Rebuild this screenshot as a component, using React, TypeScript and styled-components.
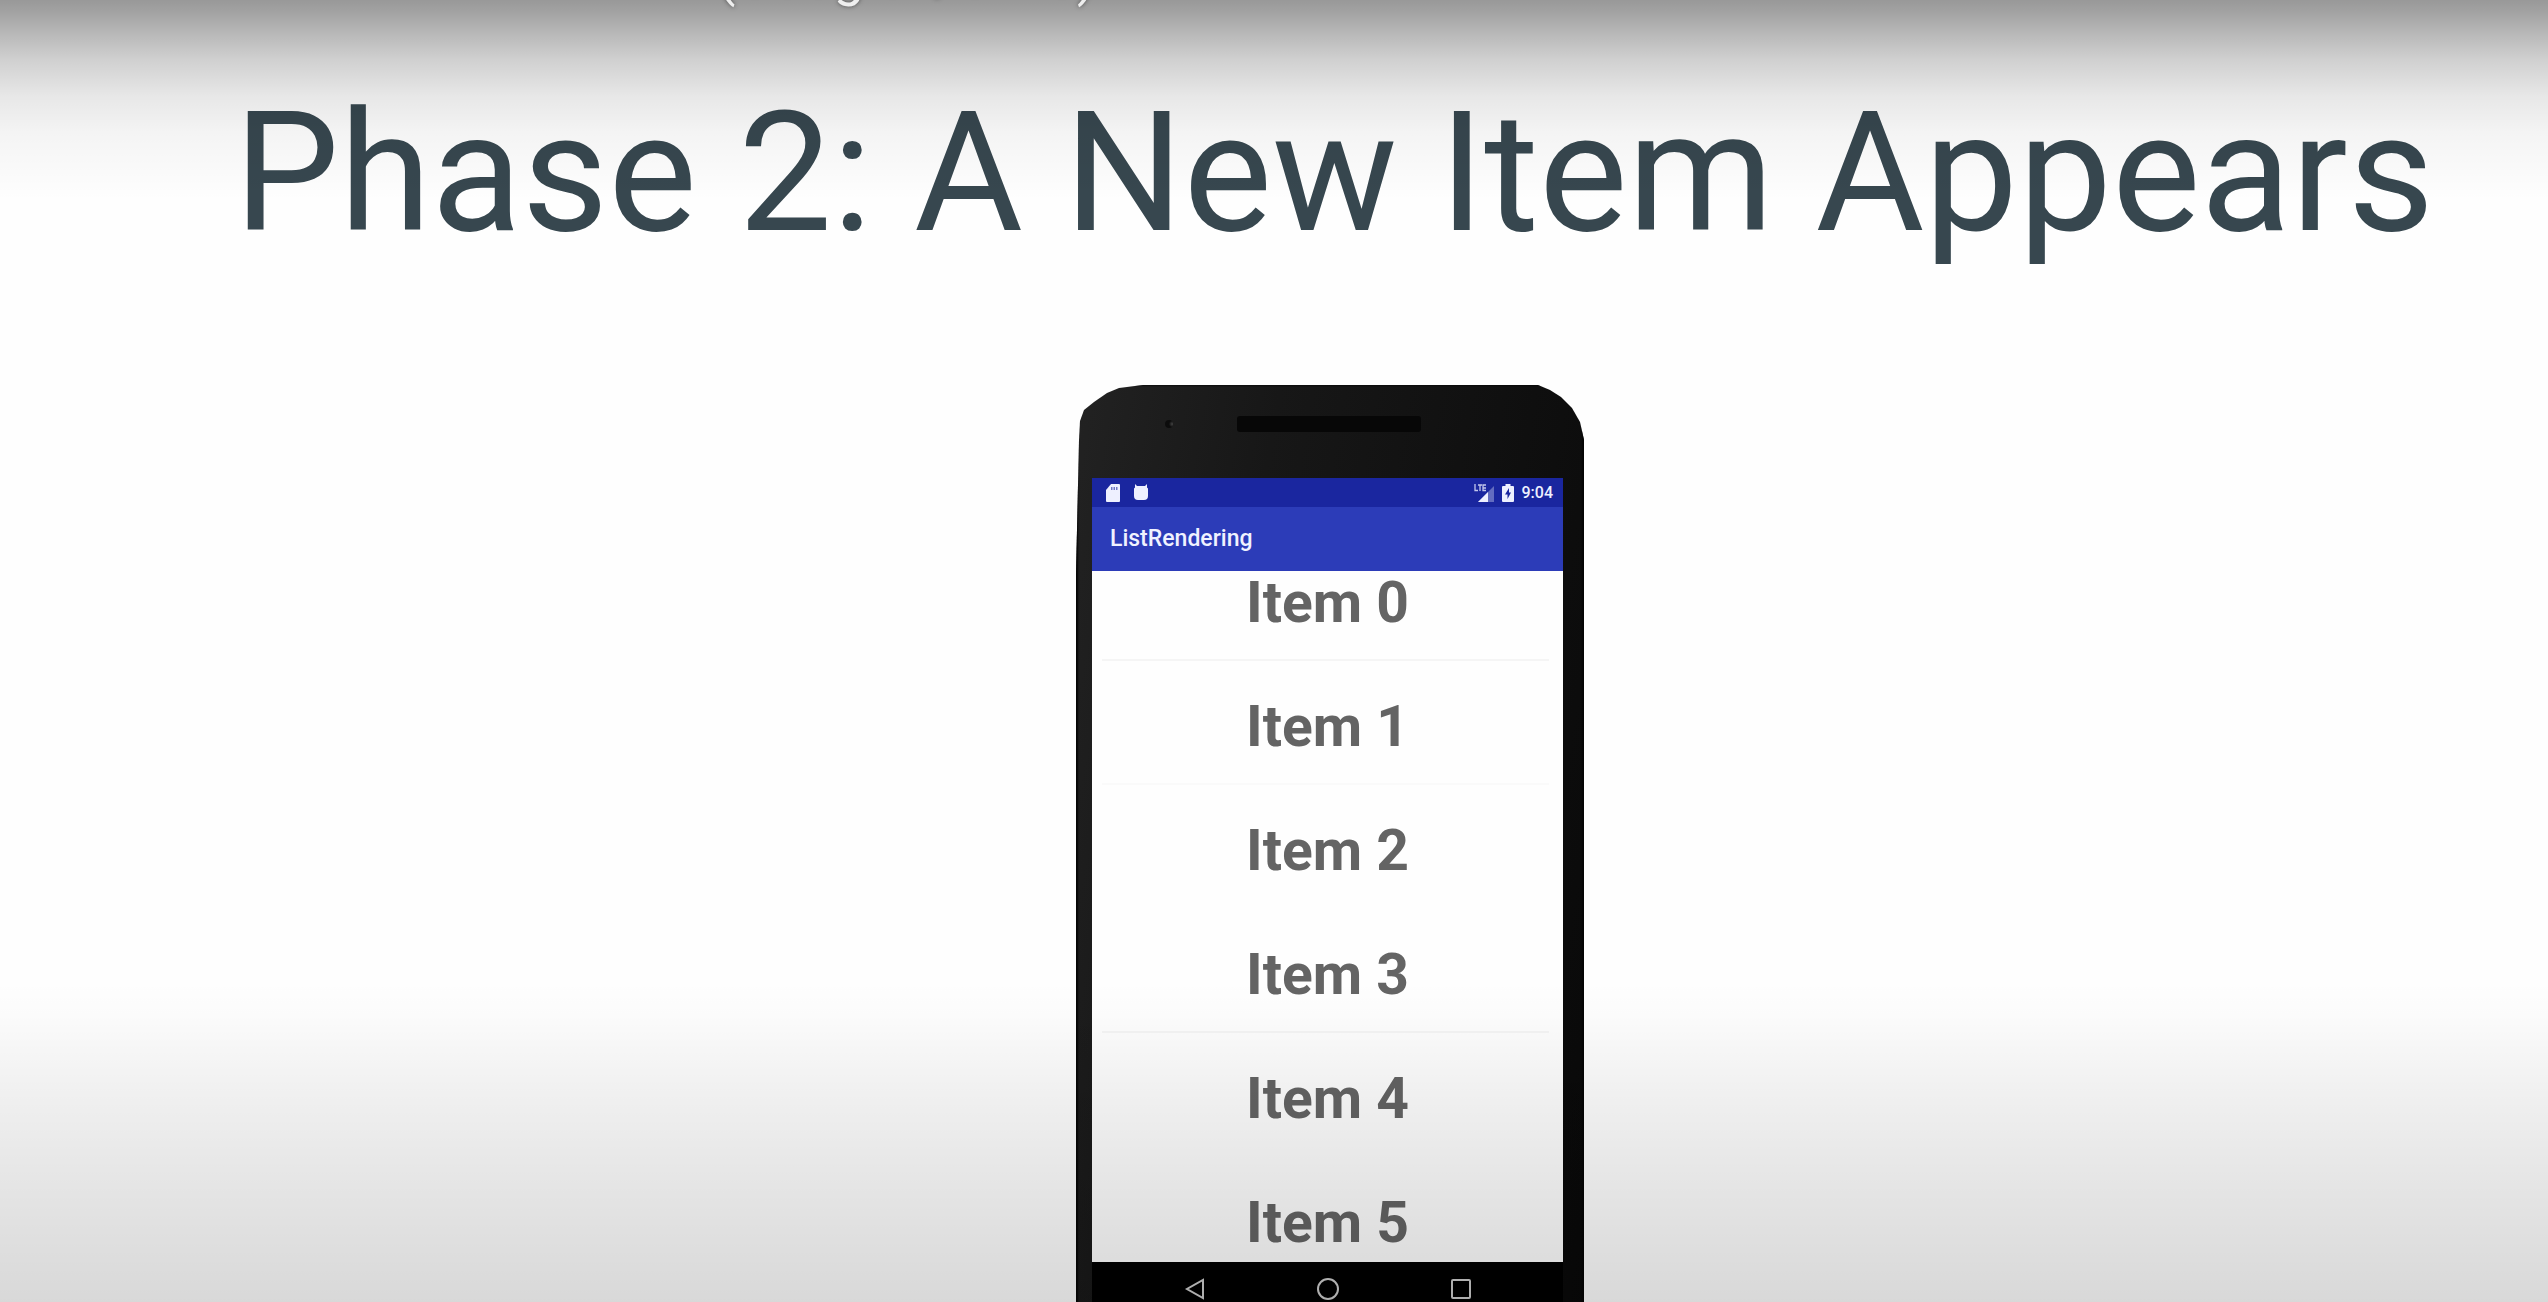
import React from "react";
import styled, { createGlobalStyle } from "styled-components";

const GlobalStyle = createGlobalStyle`
  * { box-sizing: border-box; }
  body { margin: 0; background: #fff; }
`;

const Stage = styled.main`
  position: relative;
  height: 100vh;
  overflow: hidden;
  background: #fefefe;
  font-family: Roboto, "Liberation Sans", sans-serif;

  &::before,
  &::after {
    content: "";
    position: absolute;
    left: 0;
    right: 0;
    z-index: 1;
    pointer-events: none;
  }
  &::before {
    top: 0;
    height: 200px;
    background: linear-gradient(
      rgba(0, 0, 0, 0.4) 0,
      rgba(0, 0, 0, 0.36) 12px,
      rgba(0, 0, 0, 0.27) 35px,
      rgba(0, 0, 0, 0.18) 60px,
      rgba(0, 0, 0, 0.09) 96px,
      rgba(0, 0, 0, 0.04) 133px,
      rgba(0, 0, 0, 0) 100%
    );
  }
  &::after {
    bottom: 0;
    height: 320px;
    background: linear-gradient(
      rgba(0, 0, 0, 0) 0,
      rgba(0, 0, 0, 0.01) 32px,
      rgba(0, 0, 0, 0.055) 110px,
      rgba(0, 0, 0, 0.1) 210px,
      rgba(0, 0, 0, 0.15) 100%
    );
  }
`;

const VideoTitle = styled.header`
  position: relative;
  z-index: 2;
  display: flex;
  align-items: flex-end;
  height: 7px;
  padding-left: 717px;
  color: #eee;
  font-size: 54px;
  line-height: 60px;
  white-space: nowrap;
  text-shadow: 0 0 4px rgba(0, 0, 0, 0.5);
`;

const Slide = styled.section`
  display: flex;
  flex-direction: column;
  align-items: center;
  gap: 112px;
  padding: 66px 0 0 112px;
`;

const Heading = styled.h1`
  margin: 0;
  padding-left: 8px;
  color: #37474f;
  font-size: 167px;
  font-weight: 400;
  line-height: 200px;
  white-space: nowrap;
`;

const Phone = styled.article`
  width: 508px;
  flex-shrink: 0;
  padding: 0 21px 0 16px;
  background: linear-gradient(100deg, #222 0, #171717 30%, #080808 100%);
  box-shadow: inset 2px 0 2px #050505, inset -2px 0 2px #050505;
  clip-path: polygon(
    0 190px, 3px 55px, 4px 36px, 8px 25px, 18px 17px, 31px 8px, 43px 3px, 67px 0,
    462px 0, 474px 5px, 485px 12px, 496px 23px, 504px 37px, 508px 55px, 508px 100%, 0 100%
  );
`;

const Forehead = styled.div`
  display: flex;
  align-items: center;
  gap: 64px;
  height: 93px;
  padding: 0 0 16px 73px;
`;

const Camera = styled.span`
  width: 8px;
  height: 8px;
  border-radius: 50%;
  background: radial-gradient(circle at 90% 50%, #444 0, #0c0c0c 40%);
`;

const Speaker = styled.span`
  width: 184px;
  height: 16px;
  border-radius: 3px;
  background: #070707;
`;

const StatusBar = styled.div`
  display: flex;
  align-items: center;
  justify-content: space-between;
  height: 29px;
  padding: 0 10px 0 14px;
  background: #1a269f;
  color: #eef0ff;
`;

const StatusGroup = styled.div<{ $gap: number }>`
  display: flex;
  align-items: center;
  gap: ${(p) => p.$gap}px;
`;

const Clock = styled.time`
  font-size: 16px;
  font-weight: 500;
  line-height: 20px;
`;

const AppBar = styled.h2`
  margin: 0;
  padding: 0 18px;
  background: #2c3cb8;
  color: #f0f2ff;
  font-size: 23px;
  font-weight: 500;
  line-height: 64px;
`;

const ListView = styled.div`
  height: 691px;
  overflow: hidden;
  background: #fefefe;
`;

const Rows = styled.ul`
  margin: -34px 0 0;
  padding: 0 14px 0 10px;
  list-style: none;
`;

const Row = styled.li<{ $line: string }>`
  height: 124px;
  padding: 8px 0 0 4px;
  border-bottom: 2px solid ${(p) => p.$line};
  color: #646464;
  font-size: 57px;
  font-weight: 700;
  line-height: 116px;
  text-align: center;
`;

const NavBar = styled.nav`
  display: flex;
  justify-content: center;
  gap: 105px;
  height: 120px;
  padding-top: 13px;
  background: #000;
`;

const NavButton = styled.button`
  width: 28px;
  height: 28px;
  padding: 0;
  border: 0;
  background: none;
  color: #ccc;

  svg { display: block; }
`;

const rows = [
  { label: "Item 0", line: "#f5f5f5" },
  { label: "Item 1", line: "#fafafa" },
  { label: "Item 2", line: "transparent" },
  { label: "Item 3", line: "#f5f5f5" },
  { label: "Item 4", line: "transparent" },
  { label: "Item 5", line: "transparent" },
];

const SdCard = () => (
  <svg width="14" height="18" viewBox="0 0 14 18" fill="currentColor">
    <path d="M5 0h8a1 1 0 0 1 1 1v16a1 1 0 0 1-1 1H1a1 1 0 0 1-1-1V6z" />
    <path d="M5 3h1.500v3H5zM7.500 3H9v3H7.500zM10 3h1.500v3H10z" fill="#1a269f" opacity="0.6" />
  </svg>
);

const AndroidFace = () => (
  <svg width="14" height="17" viewBox="0 0 14 17" fill="currentColor">
    <path d="M1 0l2 2h8l2-2v3.500l1 1V12a4 4 0 0 1-4 4H4a4 4 0 0 1-4-4V4.500l1-1z" />
  </svg>
);

const Signal = () => (
  <svg width="20" height="18" viewBox="0 0 20 18" fill="currentColor">
    <path
      d="M1 0v6.500h3M4 1h4M6 1v6M12 1H9v5.500h3M9 4h3"
      fill="none"
      stroke="currentColor"
      strokeWidth="1.300"
      opacity="0.8"
    />
    <path d="M20 2v16H4z" opacity="0.35" />
    <path d="M14 8v10H4z" />
  </svg>
);

const Battery = () => (
  <svg width="12" height="18" viewBox="0 0 12 18" fill="currentColor">
    <path d="M3.500 0h5v2H11a1 1 0 0 1 1 1v14a1 1 0 0 1-1 1H1a1 1 0 0 1-1-1V3a1 1 0 0 1 1-1h2.500z" />
    <path d="M7 4L3 10.500h2.500V15L9 8.500H7z" fill="#1a269f" />
  </svg>
);

export default function App() {
  return (
    <>
      <GlobalStyle />
      <Stage>
        <VideoTitle>(Google I/O '18)</VideoTitle>
        <Slide>
          <Heading>Phase 2: A New Item Appears</Heading>
          <Phone>
            <Forehead>
              <Camera />
              <Speaker />
            </Forehead>
            <StatusBar>
              <StatusGroup $gap={14}>
                <SdCard />
                <AndroidFace />
              </StatusGroup>
              <StatusGroup $gap={8}>
                <Signal />
                <Battery />
                <Clock>9:04</Clock>
              </StatusGroup>
            </StatusBar>
            <AppBar>ListRendering</AppBar>
            <ListView>
              <Rows>
                {rows.map((row) => (
                  <Row key={row.label} $line={row.line}>
                    {row.label}
                  </Row>
                ))}
              </Rows>
            </ListView>
            <NavBar>
              <NavButton aria-label="Back">
                <svg width="28" height="28" viewBox="0 0 28 28" fill="none" stroke="currentColor" strokeWidth="2">
                  <path d="M22 5v18L6 14z" />
                </svg>
              </NavButton>
              <NavButton aria-label="Home">
                <svg width="28" height="28" viewBox="0 0 28 28" fill="none" stroke="currentColor" strokeWidth="2">
                  <circle cx="14" cy="14" r="10" />
                </svg>
              </NavButton>
              <NavButton aria-label="Overview">
                <svg width="28" height="28" viewBox="0 0 28 28" fill="none" stroke="currentColor" strokeWidth="2">
                  <rect x="5" y="5" width="18" height="18" rx="1" />
                </svg>
              </NavButton>
            </NavBar>
          </Phone>
        </Slide>
      </Stage>
    </>
  );
}
